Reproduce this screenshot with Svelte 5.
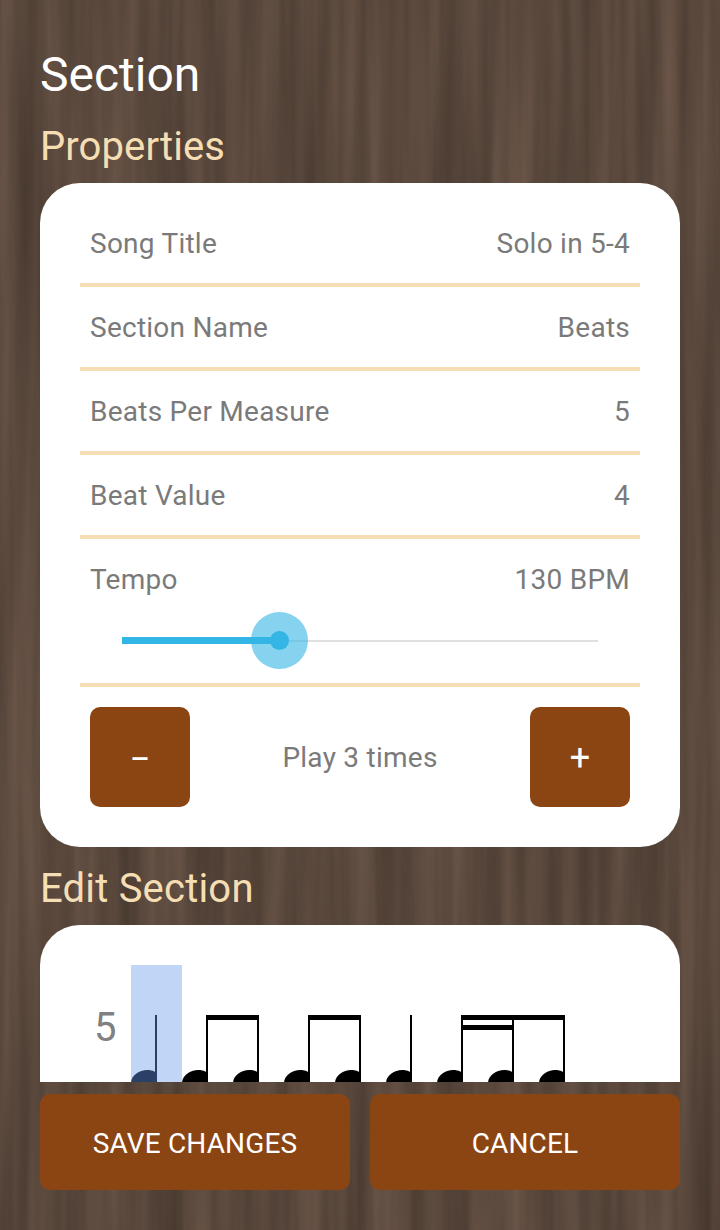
<script>
  let tempo = $state(130);
  let repeats = $state(3);

  const props = [
    { label: "Song Title", value: "Solo in 5-4" },
    { label: "Section Name", value: "Beats" },
    { label: "Beats Per Measure", value: "5" },
    { label: "Beat Value", value: "4" },
  ];

  // x of each note head, relative to the notation svg
  const step = 51;
  const noteCount = 9;
  const notes = Array.from({ length: noteCount }, (_, i) => i * step);
  const beams = [
    { x: 75, w: 53, y: 0 },
    { x: 177, w: 53, y: 0 },
    { x: 330, w: 104, y: 0 },
    { x: 330, w: 53, y: 10 },
  ];
</script>

<div class="screen">
  <svg class="wood" width="720" height="1230" aria-hidden="true">
    <filter id="grain" x="0" y="0" width="100%" height="100%" color-interpolation-filters="sRGB">
      <feTurbulence type="fractalNoise" baseFrequency="0.05 0.002" numOctaves="3" seed="11" />
      <feColorMatrix values="0.18 0 0 0 0.26  0.15 0 0 0 0.205  0.13 0 0 0 0.17  0 0 0 0 1" />
    </filter>
    <rect width="720" height="1230" filter="url(#grain)" />
  </svg>

  <div class="scroller">
    <h1>Section</h1>
    <h2>Properties</h2>
    <section class="card">
      {#each props as p}
        <div class="row">
          <span>{p.label}</span>
          <span>{p.value}</span>
        </div>
      {/each}
      <div class="tempo">
        <div class="row plain">
          <span>Tempo</span>
          <span>{tempo} BPM</span>
        </div>
        <div class="slider">
          <div class="track">
            <div class="fill"></div>
            <div class="halo"><div class="dot"></div></div>
          </div>
        </div>
      </div>
      <div class="repeat">
        <button class="minus">–</button>
        <span>Play {repeats} times</span>
        <button class="plus">+</button>
      </div>
    </section>

    <h2 class="edit">Edit Section</h2>
    <section class="card staff">
      <div class="time">5</div>
      <div class="notation">
        <div class="cursor"></div>
        <svg width="440" height="90" viewBox="0 0 440 90">
          {#each notes as x, i}
            <g fill={i === 0 ? "#2a4066" : "#000"} transform="translate({x} 0)">
              <rect x="24" y="0" width="2" height="64" />
              <path d="M0 68 C0 61 8 55 16 55 C22 55 26 57 26 61 V68 Z" />
            </g>
          {/each}
          {#each beams as b}
            <rect x={b.x} y={b.y} width={b.w} height="5" fill="#000" />
          {/each}
        </svg>
      </div>
    </section>
  </div>

  <div class="actions">
    <button>SAVE CHANGES</button>
    <button>CANCEL</button>
  </div>
</div>

<style>
  :global(body) {
    margin: 0;
    background: #58463a;
  }

  .screen {
    position: relative;
    width: 720px;
    height: 1230px;
    overflow: hidden;
    display: flex;
    flex-direction: column;
    font-family: Roboto, "Liberation Sans", sans-serif;
  }

  .wood {
    position: absolute;
    top: 0;
    left: 0;
  }

  .scroller {
    position: relative;
    height: 1082px;
    overflow: hidden;
    padding: 0 40px;
    box-sizing: border-box;
  }

  h1 {
    margin: 43px 0 0;
    font-size: 48px;
    line-height: 64px;
    font-weight: 400;
    color: #fff;
  }

  h2 {
    margin: 8px 0 0;
    font-size: 40px;
    line-height: 48px;
    height: 68px;
    font-weight: 400;
    letter-spacing: 0.1px;
    color: #f5deb3;
    box-sizing: border-box;
    padding-top: 8px;
  }

  .card {
    background: #fff;
    border-radius: 40px;
    padding: 20px 40px;
    font-size: 28px;
    letter-spacing: 0.25px;
    color: #7a7a7a;
  }

  .row {
    height: 80px;
    padding: 0 10px;
    display: flex;
    justify-content: space-between;
    align-items: center;
    border-bottom: 4px solid #f5deb3;
  }

  .row.plain {
    border-bottom: none;
  }

  .tempo {
    border-bottom: 4px solid #f5deb3;
    height: 144px;
  }

  .slider {
    padding: 21px 42px 0;
  }

  .track {
    position: relative;
    height: 2px;
    background: #e0e0e0;
  }

  .fill {
    position: absolute;
    left: 0;
    top: -3px;
    width: 158px;
    height: 7px;
    background: #33b5e5;
  }

  .halo {
    position: absolute;
    left: 129px;
    top: -28px;
    width: 57px;
    height: 57px;
    border-radius: 50%;
    background: rgba(51, 181, 229, 0.6);
    display: flex;
    align-items: center;
    justify-content: center;
  }

  .dot {
    width: 19px;
    height: 19px;
    border-radius: 50%;
    background: #33b5e5;
  }

  .repeat {
    padding: 20px 10px;
    display: flex;
    justify-content: space-between;
    align-items: center;
  }

  .repeat button {
    width: 100px;
    height: 100px;
    font-size: 30px;
    font-weight: 500;
  }

  .repeat .minus {
    padding-top: 2px;
  }

  .repeat .plus {
    font-size: 36px;
    font-weight: 400;
    padding-top: 2px;
  }

  button {
    border: none;
    padding: 0;
    background: #8b4513;
    color: #fff;
    border-radius: 10px;
    font-family: inherit;
  }

  .edit {
    margin-top: 0;
    height: 78px;
    padding-top: 18px;
    letter-spacing: 0.2px;
  }

  .staff {
    height: 240px;
    padding: 40px 0 0 54px;
    display: flex;
    box-sizing: border-box;
  }

  .time {
    width: 37px;
    padding-top: 38px;
    font-size: 40px;
    line-height: 50px;
    color: #808080;
  }

  .notation {
    position: relative;
    height: 120px;
  }

  .cursor {
    position: absolute;
    left: 0;
    top: 0;
    width: 51px;
    height: 120px;
    background: #c1d5f7;
  }

  .notation svg {
    position: relative;
    display: block;
    margin-top: 50px;
    overflow: visible;
  }

  .actions {
    position: relative;
    margin-top: 12px;
    padding: 0 40px;
    display: flex;
    gap: 20px;
  }

  .actions button {
    flex: 1;
    height: 96px;
    font-size: 28px;
    letter-spacing: 0.15px;
    padding-top: 2px;
  }
</style>
